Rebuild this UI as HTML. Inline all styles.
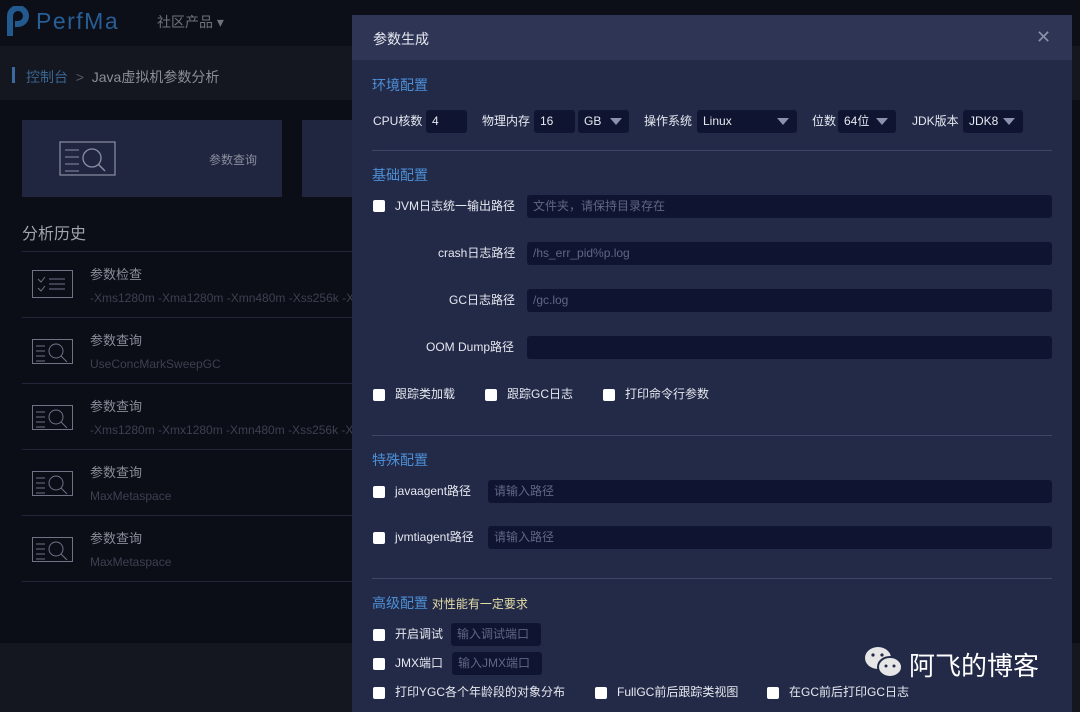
<!DOCTYPE html>
<html><head><meta charset="utf-8"><style>
*{margin:0;padding:0;box-sizing:border-box}
body{width:1080px;height:712px;overflow:hidden;background:#0b0d17;font-family:"Liberation Sans","Noto Sans CJK SC",sans-serif;position:relative;font-size:13px}
.a{position:absolute;white-space:nowrap}
.inp{position:absolute;background:#0f1431;border-radius:3px;height:23px;color:#5f6785;font-size:12px;line-height:23px;padding-left:6px}
.cb{position:absolute;width:12px;height:12px;background:#fff;border-radius:2px}
.lbl{position:absolute;color:#e6e8ef;font-size:12px;white-space:nowrap;line-height:16px}
.h{position:absolute;color:#4d8fd6;font-size:14px;line-height:18px}
.hr{position:absolute;left:372px;width:680px;height:1px;background:#3e4666}
.tri{display:inline-block;width:0;height:0;border-left:6px solid transparent;border-right:6px solid transparent;border-top:7px solid #8a92ad;position:absolute;top:8px}
.sep{position:absolute;left:22px;width:330px;height:1px;background:#23263a}
</style></head><body>
<div class="a" style="left:0;top:0;width:1080px;height:46px;background:#0c0e18"></div>
<div class="a" style="left:0;top:46px;width:1080px;height:54px;background:#141620"></div>
<div class="a" style="left:0;top:643px;width:1080px;height:69px;background:#141620"></div>
<svg class="a" style="left:6px;top:6px" width="28" height="32" viewBox="0 0 28 32"><path d="M4 30V10a8 8 0 0 1 16 0a8 8 0 0 1-8 8h-3" fill="none" stroke="#22598e" stroke-width="6"/></svg>
<div class="a" style="left:36px;top:8px;color:#285f94;font-size:23px;letter-spacing:1.5px">PerfMa</div>
<div class="a" style="left:157px;top:12px;color:#6f727e;font-size:14px">社区产品 ▾</div>
<div class="a" style="left:12px;top:67px;width:3px;height:16px;background:#3b6aa0"></div>
<div class="a" style="left:26px;top:67px;color:#3a6590;font-size:14px">控制台 <span style="color:#555a66">&nbsp;&gt;&nbsp;</span> <span style="color:#8b8e99">Java虚拟机参数分析</span></div>
<div class="a" style="left:22px;top:120px;width:260px;height:77px;background:#212640"></div>
<div class="a" style="left:302px;top:120px;width:60px;height:77px;background:#212640"></div>
<svg class="a" style="left:59px;top:141px" width="57" height="36"><rect x="1" y="1" width="55" height="33" fill="none" stroke="#8a8fa3" stroke-width="1.2"/><path d="M6 9h14M6 16h14M6 23h14M6 30h14" stroke="#8a8fa3"/><circle cx="33" cy="17" r="9" fill="none" stroke="#8a8fa3" stroke-width="1.3"/><path d="M39 23l7 7" stroke="#8a8fa3" stroke-width="1.5"/></svg>
<div class="a" style="left:209px;top:151px;color:#8a8e9c;font-size:12px">参数查询</div>
<div class="a" style="left:22px;top:220px;color:#a2a5b0;font-size:16px">分析历史</div>
<div class="sep" style="top:251px"></div><div class="sep" style="top:317px"></div><div class="sep" style="top:383px"></div><div class="sep" style="top:449px"></div><div class="sep" style="top:515px"></div><div class="sep" style="top:581px"></div>
<svg class="a" style="left:32px;top:270px" width="41" height="28"><rect x="0.5" y="0.5" width="40" height="27" fill="none" stroke="#6f7385"/><path d="M6 9l3 3 4-5M6 18l3 3 4-5M17 9h16M17 14h16M17 19h16" stroke="#6f7385" fill="none"/></svg>
<div class="a" style="left:90px;top:264px;color:#8a8d99;font-size:13px">参数检查</div>
<div class="a" style="left:90px;top:291px;color:#3d4150;font-size:12px">-Xms1280m -Xma1280m -Xmn480m -Xss256k -X</div>
<div class="a" style="left:90px;top:330px;color:#8a8d99;font-size:13px">参数查询</div>
<div class="a" style="left:90px;top:357px;color:#3d4150;font-size:12px">UseConcMarkSweepGC</div>
<div class="a" style="left:90px;top:396px;color:#8a8d99;font-size:13px">参数查询</div>
<div class="a" style="left:90px;top:423px;color:#3d4150;font-size:12px">-Xms1280m -Xmx1280m -Xmn480m -Xss256k -X</div>
<div class="a" style="left:90px;top:462px;color:#8a8d99;font-size:13px">参数查询</div>
<div class="a" style="left:90px;top:489px;color:#3d4150;font-size:12px">MaxMetaspace</div>
<div class="a" style="left:90px;top:528px;color:#8a8d99;font-size:13px">参数查询</div>
<div class="a" style="left:90px;top:555px;color:#3d4150;font-size:12px">MaxMetaspace</div>
<svg class="a" style="left:32px;top:339px" width="41" height="26"><g fill="none" stroke="#6f7385"><rect x="0.5" y="0.5" width="40" height="24"/><path d="M4 7h9M4 12h9M4 17h9M4 22h9"/><circle cx="24" cy="12" r="7"/><path d="M29 17l6 6"/></g></svg>
<svg class="a" style="left:32px;top:405px" width="41" height="26"><g fill="none" stroke="#6f7385"><rect x="0.5" y="0.5" width="40" height="24"/><path d="M4 7h9M4 12h9M4 17h9M4 22h9"/><circle cx="24" cy="12" r="7"/><path d="M29 17l6 6"/></g></svg>
<svg class="a" style="left:32px;top:471px" width="41" height="26"><g fill="none" stroke="#6f7385"><rect x="0.5" y="0.5" width="40" height="24"/><path d="M4 7h9M4 12h9M4 17h9M4 22h9"/><circle cx="24" cy="12" r="7"/><path d="M29 17l6 6"/></g></svg>
<svg class="a" style="left:32px;top:537px" width="41" height="26"><g fill="none" stroke="#6f7385"><rect x="0.5" y="0.5" width="40" height="24"/><path d="M4 7h9M4 12h9M4 17h9M4 22h9"/><circle cx="24" cy="12" r="7"/><path d="M29 17l6 6"/></g></svg>
<div class="a" style="left:1072px;top:100px;width:8px;height:543px;background:#0b0d17"></div>

<div class="a" style="left:352px;top:15px;width:720px;height:697px;background:#222a48"></div>
<div class="a" style="left:352px;top:15px;width:720px;height:45px;background:#2e3555"></div>
<div class="a" style="left:373px;top:29px;color:#e8eaf2;font-size:14px">参数生成</div>
<div class="a" style="left:1036px;top:27px;color:#8a90a8;font-size:18px">✕</div>

<div class="h" style="left:372px;top:76px">环境配置</div>
<div class="lbl" style="left:373px;top:113px">CPU核数</div>
<div class="inp" style="left:426px;top:110px;width:41px;color:#e6e8ef">4</div>
<div class="lbl" style="left:482px;top:113px">物理内存</div>
<div class="inp" style="left:534px;top:110px;width:41px;color:#e6e8ef">16</div>
<div class="inp" style="left:578px;top:110px;width:51px;color:#e6e8ef">GB<span class="tri" style="left:32px"></span></div>
<div class="lbl" style="left:644px;top:113px">操作系统</div>
<div class="inp" style="left:697px;top:110px;width:100px;color:#e6e8ef">Linux<span class="tri" style="left:80px"></span></div>
<div class="lbl" style="left:812px;top:113px">位数</div>
<div class="inp" style="left:838px;top:110px;width:58px;color:#e6e8ef">64位<span class="tri" style="left:38px"></span></div>
<div class="lbl" style="left:912px;top:113px">JDK版本</div>
<div class="inp" style="left:963px;top:110px;width:60px;color:#e6e8ef">JDK8<span class="tri" style="left:40px"></span></div>
<div class="hr" style="top:150px"></div>

<div class="h" style="left:372px;top:166px">基础配置</div>
<div class="cb" style="left:373px;top:200px"></div>
<div class="lbl" style="left:395px;top:198px">JVM日志统一输出路径</div>
<div class="inp" style="left:527px;top:195px;width:525px">文件夹，请保持目录存在</div>
<div class="lbl" style="left:438px;top:245px">crash日志路径</div>
<div class="inp" style="left:527px;top:242px;width:525px">/hs_err_pid%p.log</div>
<div class="lbl" style="left:449px;top:292px">GC日志路径</div>
<div class="inp" style="left:527px;top:289px;width:525px">/gc.log</div>
<div class="lbl" style="left:426px;top:339px">OOM Dump路径</div>
<div class="inp" style="left:527px;top:336px;width:525px"></div>
<div class="cb" style="left:373px;top:389px"></div><div class="lbl" style="left:395px;top:386px">跟踪类加载</div>
<div class="cb" style="left:485px;top:389px"></div><div class="lbl" style="left:507px;top:386px">跟踪GC日志</div>
<div class="cb" style="left:603px;top:389px"></div><div class="lbl" style="left:625px;top:386px">打印命令行参数</div>
<div class="hr" style="top:435px"></div>

<div class="h" style="left:372px;top:451px">特殊配置</div>
<div class="cb" style="left:373px;top:486px"></div><div class="lbl" style="left:395px;top:483px">javaagent路径</div>
<div class="inp" style="left:488px;top:480px;width:564px">请输入路径</div>
<div class="cb" style="left:373px;top:532px"></div><div class="lbl" style="left:395px;top:529px">jvmtiagent路径</div>
<div class="inp" style="left:488px;top:526px;width:564px">请输入路径</div>
<div class="hr" style="top:578px"></div>

<div class="h" style="left:372px;top:594px">高级配置 <span style="color:#e6dfa8;font-size:12px">对性能有一定要求</span></div>
<div class="cb" style="left:373px;top:629px"></div><div class="lbl" style="left:395px;top:626px">开启调试</div>
<div class="inp" style="left:451px;top:623px;width:90px">输入调试端口</div>
<div class="cb" style="left:373px;top:658px"></div><div class="lbl" style="left:395px;top:655px">JMX端口</div>
<div class="inp" style="left:452px;top:652px;width:90px">输入JMX端口</div>
<div class="cb" style="left:373px;top:687px"></div><div class="lbl" style="left:395px;top:684px">打印YGC各个年龄段的对象分布</div>
<div class="cb" style="left:595px;top:687px"></div><div class="lbl" style="left:617px;top:684px">FullGC前后跟踪类视图</div>
<div class="cb" style="left:767px;top:687px"></div><div class="lbl" style="left:789px;top:684px">在GC前后打印GC日志</div>

<svg class="a" style="left:862px;top:643px" width="44" height="40"><ellipse cx="16" cy="15" rx="13" ry="11" fill="#e6e6e6"/><ellipse cx="28" cy="24" rx="12" ry="10" fill="#e6e6e6" stroke="#222a48" stroke-width="2"/><circle cx="11" cy="12" r="1.6" fill="#222a48"/><circle cx="20" cy="12" r="1.6" fill="#222a48"/><circle cx="24" cy="23" r="1.5" fill="#222a48"/><circle cx="32" cy="23" r="1.5" fill="#222a48"/></svg>
<div class="a" style="left:909px;top:646px;color:#fff;font-size:26px">阿飞的博客</div>
</body></html>
